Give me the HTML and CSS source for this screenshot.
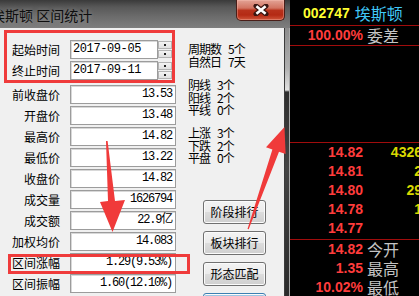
FILE: index.html
```html
<!DOCTYPE html>
<html lang="zh">
<head>
<meta charset="utf-8">
<title>区间统计</title>
<link rel="stylesheet" href="styles.css">
</head>
<body>
<div class="screen">
  <div class="dialog">
    <div class="titlebar">
      <span class="title">埃斯顿 区间统计</span>
      <div class="close">
        <svg width="16" height="12" viewBox="0 0 16 12">
          <path d="M3 2 L13 10 M13 2 L3 10" stroke="#3a1612" stroke-width="5" stroke-linecap="round" fill="none"/>
          <path d="M3.4 2.3 L12.6 9.7 M12.6 2.3 L3.4 9.7" stroke="#ffffff" stroke-width="2.6" stroke-linecap="butt" fill="none"/>
        </svg>
      </div>
    </div>
    <div class="frame">
      <div class="panel">
        <div class="fields">
          <div class="row">
            <span class="label">起始时间</span>
            <div class="datebox">2017-09-05</div>
            <div class="spin"><i></i><i></i></div>
          </div>
          <div class="row">
            <span class="label">终止时间</span>
            <div class="datebox">2017-09-11</div>
            <div class="spin"><i></i><i></i></div>
          </div>
          <div class="row first">
            <span class="label">前收盘价</span><div class="valbox">13.53</div>
          </div>
          <div class="row"><span class="label">开盘价</span><div class="valbox">13.48</div></div>
          <div class="row"><span class="label">最高价</span><div class="valbox">14.82</div></div>
          <div class="row"><span class="label">最低价</span><div class="valbox">13.22</div></div>
          <div class="row"><span class="label">收盘价</span><div class="valbox">14.82</div></div>
          <div class="row"><span class="label">成交量</span><div class="valbox">1626794</div></div>
          <div class="row"><span class="label">成交额</span><div class="valbox">22.9亿</div></div>
          <div class="row"><span class="label">加权均价</span><div class="valbox">14.083</div></div>
          <div class="row"><span class="label">区间涨幅</span><div class="valbox">1.29(9.53%)</div></div>
          <div class="row"><span class="label">区间振幅</span><div class="valbox">1.60(12.10%)</div></div>
        </div>
        <div class="info">
          <div class="grp g1">
            <p>周期数<span class="sp"></span>5个</p>
            <p>自然日<span class="sp"></span>7天</p>
          </div>
          <div class="grp g2">
            <p>阴线<span class="sp"></span>3个</p>
            <p>阳线<span class="sp"></span>2个</p>
            <p>平线<span class="sp"></span>0个</p>
          </div>
          <div class="grp g3">
            <p>上涨<span class="sp"></span>3个</p>
            <p>下跌<span class="sp"></span>2个</p>
            <p>平盘<span class="sp"></span>0个</p>
          </div>
          <div class="btns">
            <button class="btn">阶段排行</button>
            <button class="btn">板块排行</button>
            <button class="btn">形态匹配</button>
            <button class="btn focus">区间分析</button>
          </div>
        </div>
      </div>
      <div class="edge"></div>
    </div>
  </div>

  <div class="quote">
    <div class="q-head"><span class="code">002747</span><span class="name">埃斯顿</span></div>
    <div class="q-row sep"><span class="price">100.00%</span><span class="tag">委差</span></div>
    <div class="q-empty"></div>
    <div class="q-book">
      <div class="q-row"><span class="price">14.82</span><span class="vol">4326</span></div>
      <div class="q-row"><span class="price">14.81</span><span class="vol">2</span></div>
      <div class="q-row"><span class="price">14.80</span><span class="vol">29</span></div>
      <div class="q-row"><span class="price">14.78</span><span class="vol">1</span></div>
      <div class="q-row"><span class="price">14.77</span><span class="vol"></span></div>
    </div>
    <div class="q-row"><span class="price">14.82</span><span class="tag">今开</span></div>
    <div class="q-row"><span class="price">1.35</span><span class="tag">最高</span></div>
    <div class="q-row"><span class="price">10.02%</span><span class="tag">最低</span></div>
  </div>

  <div class="mark mark1"></div>
  <div class="mark mark2"></div>
  <svg class="arrows" width="419" height="296" viewBox="0 0 419 296">
    <polygon points="106,141 107.6,141 115,201 125,200 112.5,232 100,202 108,201" fill="#f03a3a"/>
    <polygon points="247.5,229 248.7,229.3 279,151.8 285.6,154 284.5,127 266,147.3 272.4,149.4" fill="#f03a3a"/>
  </svg>
</div>
</body>
</html>
```

FILE: styles.css
```css
* {
  box-sizing: border-box;
  margin: 0;
  padding: 0;
}

html, body {
  width: 419px;
  height: 296px;
  overflow: hidden;
  background: #000;
}

body {
  font-family: "Noto Sans CJK SC", "Liberation Sans", sans-serif;
}

.screen {
  position: relative;
  display: flex;
  width: 419px;
  height: 296px;
  overflow: hidden;
}

/* ---------- dialog ---------- */
.dialog {
  width: 290px;
  flex: none;
  display: flex;
  flex-direction: column;
}

.titlebar {
  height: 28px;
  flex: none;
  display: flex;
  justify-content: space-between;
  align-items: flex-start;
  background: linear-gradient(#3a3a3a, #585858 25%, #6c6c6c 60%, #7e7e7e);
}

.title {
  margin-left: -9px;
  margin-top: 6px;
  font-size: 14px;
  line-height: 18px;
  color: #0e0e0e;
  white-space: nowrap;
  text-shadow: 0 0 5px rgba(255, 255, 255, 0.25);
}

.close {
  width: 49px;
  height: 21px;
  margin-right: 5px;
  border: 1px solid #4a1e18;
  border-top: none;
  border-radius: 0 0 5px 5px;
  background: linear-gradient(#e3a396, #d27462 40%, #b8321c 52%, #b42a14 75%, #d0553a);
  box-shadow: inset 0 0 0 1px rgba(255, 200, 190, 0.35);
  display: flex;
  align-items: center;
  justify-content: center;
}

.frame {
  flex: 1;
  display: flex;
  min-height: 0;
}

.panel {
  width: 285px;
  flex: none;
  display: flex;
  background: #f0f0f0;
  border-right: 1px solid #3c3c3c;
}

.edge {
  width: 5px;
  flex: none;
  border-right: 1px solid #a8a8a8;
  background: linear-gradient(#8c8c8c, #b0b0b0 40px, #e2e2e2 62px, #2e2e2e 64px, #454545 140px, #2a2a2a);
}

/* ---------- fields ---------- */
.fields {
  width: 176px;
  flex: none;
  padding-top: 12px;
  display: flex;
  flex-direction: column;
  gap: 2px;
}

.row {
  display: flex;
  align-items: center;
  height: 19px;
  flex: none;
}

.row.first {
  margin-top: 3px;
}

.label {
  width: 60px;
  margin-right: 10px;
  text-align: right;
  font-size: 12px;
  line-height: 19px;
  color: #000;
  white-space: nowrap;
}

.datebox,
.valbox {
  height: 19px;
  background: #fff;
  border: 1px solid #9c9c9c;
  box-shadow: inset 1px 1px 0 #d8d8d8;
  font-family: "Liberation Mono", "Noto Sans CJK SC", monospace;
  font-size: 12px;
  line-height: 17px;
  color: #000;
  white-space: nowrap;
  overflow: hidden;
}

.datebox {
  width: 88px;
  padding-left: 2px;
  letter-spacing: -0.4px;
}

.spin {
  width: 14px;
  height: 17px;
  display: flex;
  flex-direction: column;
  gap: 1px;
}

.spin i {
  flex: 1;
  display: flex;
  align-items: center;
  justify-content: center;
  background: linear-gradient(#f4f4f4, #e0e0e0);
  border: 1px solid #b4b4b4;
}

.spin i::after {
  content: "";
  width: 2px;
  height: 2px;
  background: #202020;
}

.valbox {
  width: 106px;
  text-align: right;
  padding-right: 3px;
  letter-spacing: -1.2px;
}

/* ---------- info column ---------- */
.info {
  margin-left: 12px;
  padding-top: 15px;
  display: flex;
  flex-direction: column;
}

.grp p {
  font-size: 12px;
  line-height: 12.5px;
  letter-spacing: -1px;
  color: #000;
  white-space: nowrap;
}

.sp {
  display: inline-block;
  width: 7px;
}

.g2 {
  margin-top: 11px;
}

.g3 {
  margin-top: 10.5px;
}

.btns {
  margin-top: 35.5px;
  margin-left: 15px;
  display: flex;
  flex-direction: column;
  gap: 7px;
}

.btn {
  width: 63px;
  height: 24px;
  flex: none;
  border: 1px solid #707070;
  border-radius: 3px;
  background: linear-gradient(#f3f3f3, #ebebeb 48%, #dcdcdc 52%, #cfcfcf);
  box-shadow: inset 0 0 0 1px #fbfbfb;
  font-family: "Noto Sans CJK SC", sans-serif;
  font-size: 12px;
  line-height: 20px;
  color: #000;
}

.btn.focus {
  border-color: #3c7fb1;
  box-shadow: inset 0 0 0 1px #fbfbfb, inset 0 0 0 2px #9ac6e4;
}

/* ---------- quote panel ---------- */
.quote {
  width: 129px;
  flex: none;
  display: flex;
  flex-direction: column;
  background: #000;
  font-family: "Liberation Sans", Arial, sans-serif;
  font-weight: bold;
  font-size: 14px;
}

.q-head {
  height: 26px;
  flex: none;
  display: flex;
  align-items: center;
  padding-left: 13px;
  border-bottom: 1px solid #a00c0c;
}

.code {
  color: #ffff30;
}

.name {
  margin-left: 5px;
  font-family: "Noto Sans CJK SC", sans-serif;
  font-weight: normal;
  font-size: 16px;
  color: #40c8f8;
}

.q-row {
  height: 19px;
  flex: none;
  display: grid;
  grid-template-columns: 73px 59px;
  align-items: center;
  line-height: 19px;
  white-space: nowrap;
}

.q-row.sep {
  height: 20px;
  border-bottom: 1px solid #a00c0c;
}

.q-empty {
  height: 97px;
  flex: none;
  border-bottom: 1px solid #a00c0c;
}

.q-book {
  flex: none;
  padding-bottom: 1px;
  border-bottom: 1px solid #a00c0c;
}

.price {
  text-align: right;
  color: #ff3c3c;
}

.vol {
  text-align: right;
  color: #d8d800;
}

.tag {
  margin-left: 4px;
  font-family: "Noto Sans CJK SC", sans-serif;
  font-weight: normal;
  font-size: 16px;
  color: #c4c4c4;
}

/* ---------- annotations ---------- */
.mark {
  position: absolute;
  border: 3px solid #ef3b3b;
}

.mark1 {
  left: 4px;
  top: 30px;
  width: 171px;
  height: 53px;
}

.mark2 {
  left: 8px;
  top: 254px;
  width: 182px;
  height: 20px;
}

.arrows {
  position: absolute;
  left: 0;
  top: 0;
  pointer-events: none;
}
```
